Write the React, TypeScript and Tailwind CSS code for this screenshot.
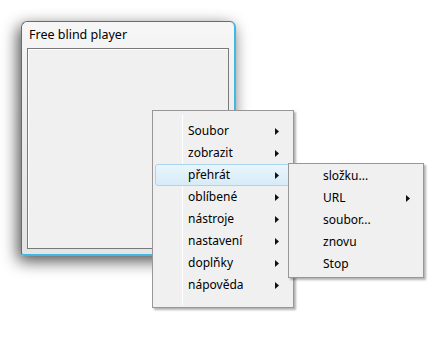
const MAIN_ITEMS = [
  'Soubor',
  'zobrazit',
  'přehrát',
  'oblíbené',
  'nástroje',
  'nastavení',
  'doplňky',
  'nápověda',
];

const SUB_ITEMS = [
  { label: 'složku...', arrow: false },
  { label: 'URL', arrow: true },
  { label: 'soubor...', arrow: false },
  { label: 'znovu', arrow: false },
  { label: 'Stop', arrow: false },
];

function Arrow() {
  return (
    <svg width="4" height="7" viewBox="0 0 4 7" className="block">
      <path d="M0 0 L4 3.5 L0 7 Z" fill="#111" />
    </svg>
  );
}

export default function App() {
  return (
    <div
      className="relative w-[446px] h-[340px] bg-white overflow-hidden"
      style={{ fontFamily: '"Noto Sans", "DejaVu Sans", sans-serif' }}
    >
      {/* window */}
      <div className="ml-[21px] mt-[21px] w-[215px] h-[235px] flex flex-col rounded-t-[6px] rounded-b-[3px] border border-[#6a6a6a] border-r-[#3db9e4] border-b-[#3db9e4] border-r-2 border-b-2 bg-gradient-to-b from-[#f6f6f6] via-[#ebebeb] to-[#e4e4e4] shadow-[-3px_5px_16px_rgba(0,0,0,0.7)]">
        <div className="h-[26px] flex items-center pl-[7px] text-[12.5px] text-black">
          Free blind player
        </div>
        <div className="flex-1 mx-[5px] mb-[5px] border border-[#7a7a7a] bg-[#f0f0f0] shadow-[inset_1px_1px_0_#fff]" />
      </div>

      {/* main context menu */}
      <div className="absolute left-[152px] top-[110px] w-[142px] h-[198px] bg-[#f0f0f0] border border-[#979797] shadow-[2px_2px_2px_rgba(0,0,0,0.3)] flex">
        <div className="relative w-full pt-[9px] px-[2px]">
          <div className="absolute left-[29px] top-[4px] bottom-[2px] w-px bg-[#e2e3e3] border-r border-white" />
          {MAIN_ITEMS.map((label) => {
            const active = label === 'přehrát';
            return (
              <div
                key={label}
                className={`relative h-[22px] flex items-center pl-[32px] pr-[11px] text-[12px] text-black rounded-[3px] border ${
                  active
                    ? 'border-[#a9d6ee] bg-gradient-to-b from-[#eaf5fc] to-[#d6ebf8]'
                    : 'border-transparent'
                }`}
              >
                <span className="flex-1">{label}</span>
                <Arrow />
              </div>
            );
          })}
        </div>
      </div>

      {/* submenu */}
      <div className="absolute left-[288px] top-[163px] w-[136px] h-[115px] bg-[#f0f0f0] border border-[#979797] shadow-[2px_2px_2px_rgba(0,0,0,0.3)] pt-[1px] px-[2px]">
        {SUB_ITEMS.map((item) => (
          <div
            key={item.label}
            className="h-[22px] flex items-center pl-[32px] pr-[11px] text-[12px] text-black"
          >
            <span className="flex-1">{item.label}</span>
            {item.arrow && <Arrow />}
          </div>
        ))}
      </div>
    </div>
  );
}
